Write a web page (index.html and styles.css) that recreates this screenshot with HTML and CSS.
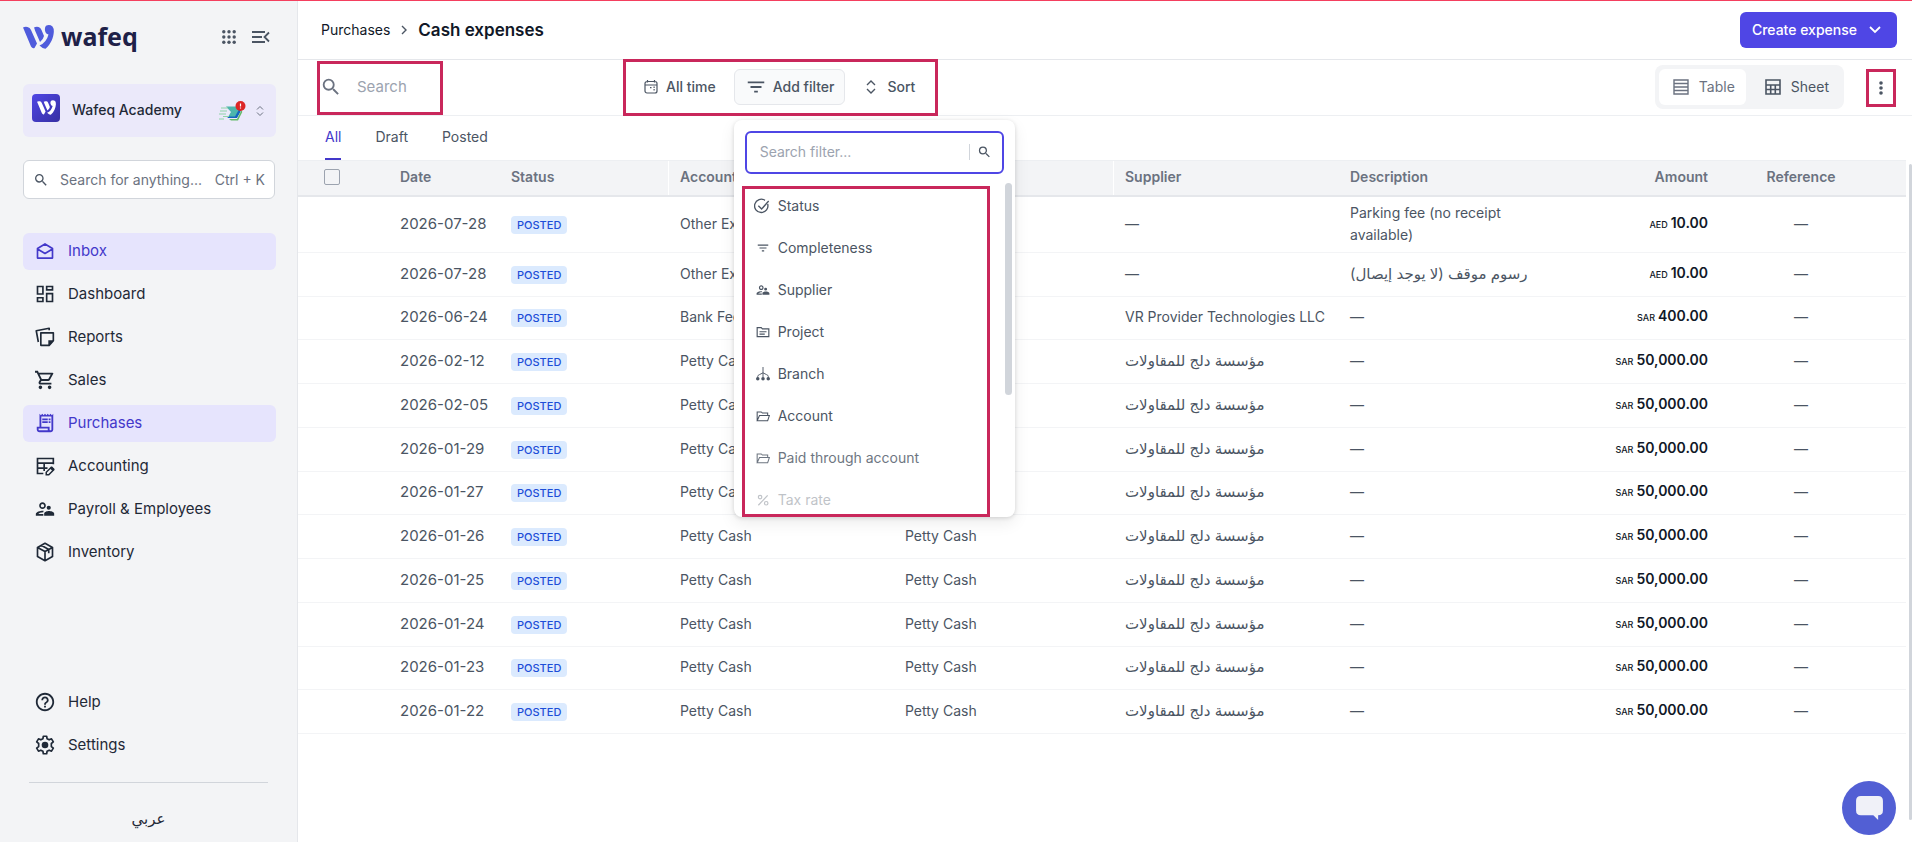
FILE: index.html
```html
<!DOCTYPE html>
<html lang="en">
<head>
    <meta charset="UTF-8">
    <meta name="viewport" content="width=device-width, initial-scale=1.0">
    <title>Cash expenses</title>
    <link rel="stylesheet" href="styles.css">
</head>
<body>
    <!-- shared icons -->
    <svg class="sprite" aria-hidden="true">
        <symbol id="logo-mark" viewBox="0 0 31 24">
            <path d="M0 2.500Q2 1.500 4.500 2Q7 2.500 8 5L14 18.500L11.500 23Q9.500 24 8 21.500L1.500 6Q.8 4 0 2.500Z"/>
            <path d="M11 2.500Q13 1.500 15.500 2Q17.500 2.500 18.500 5L21 11Q20.500 14 17 17L12 5.500Q11.700 4 11 2.500Z"/>
            <path d="M23 .8Q26.500-1 29.500 1.500Q31 3.500 30.800 7C30.500 12.500 28 19 22.500 23.800Q20 24 16.500 20.500Q23.500 17.500 25.500 9.500Q22.500 9 22 5.500Q21.500 2.500 23 .8Z"/>
        </symbol>
        <symbol id="search" viewBox="0 0 24 24"><path d="M15.500 14h-.79l-.28-.27A6.470 6.470 0 0 0 16 9.500 6.500 6.500 0 1 0 9.500 16c1.610 0 3.090-.59 4.230-1.570l.27.28v.79l5 4.990L20.490 19l-4.990-5zm-6 0C7.010 14 5 11.990 5 9.500S7.010 5 9.500 5 14 7.010 14 9.500 11.990 14 9.500 14z"/></symbol>
        <symbol id="sort" viewBox="0 0 24 24"><path d="M6 9l6-6 6 6M6 15l6 6 6-6" fill="none" stroke="currentColor" stroke-width="2"/></symbol>
        <symbol id="filter" viewBox="0 0 24 24"><path d="M10 18h4v-2h-4v2zM3 6v2h18V6H3zm3 7h12v-2H6v2z"/></symbol>
        <symbol id="people" viewBox="0 0 24 24"><path d="M16.500 13a2.500 2.500 0 1 0 0-5 2.500 2.500 0 0 0 0 5zM9 12c2.200 0 4-1.800 4-4s-1.800-4-4-4-4 1.800-4 4 1.800 4 4 4zm0-6c1.100 0 2 .9 2 2s-.9 2-2 2-2-.9-2-2 .9-2 2-2zM4 18c.22-.72 3.310-2 6-2 0-.7.130-1.370.4-1.970C7.600 13.700 1 15.100 1 18v2h9v-2H4zm12.500-3.500c-1.830 0-5.500 1.010-5.500 3V20h12v-2.500c0-1.990-3.670-3-6.500-3z"/></symbol>
        <symbol id="folder" viewBox="0 0 24 24"><path d="M2 20V5h7l2 2h9v4M2 20l4-9h17l-3 9z" fill="none" stroke="currentColor" stroke-width="1.800"/></symbol>
    </svg>

    <div class="app">
        <aside class="sidebar">
            <div class="brand">
                <svg class="brand-mark"><use href="#logo-mark"/></svg>
                <span class="brand-name">wafeq</span>
                <button class="icon-btn" aria-label="Apps">
                    <svg viewBox="0 0 14 14" width="14" height="14"><g><circle cx="1.800" cy="1.800" r="1.700"/><circle cx="7" cy="1.800" r="1.700"/><circle cx="12.200" cy="1.800" r="1.700"/><circle cx="1.800" cy="7" r="1.700"/><circle cx="7" cy="7" r="1.700"/><circle cx="12.200" cy="7" r="1.700"/><circle cx="1.800" cy="12.200" r="1.700"/><circle cx="7" cy="12.200" r="1.700"/><circle cx="12.200" cy="12.200" r="1.700"/></g></svg>
                </button>
                <button class="icon-btn" aria-label="Collapse menu">
                    <svg viewBox="0 0 18 14" width="18" height="14"><path d="M0 2h13M0 7h10M0 12h13M17 2.500L12.500 7l4.500 4.500" fill="none" stroke="currentColor" stroke-width="1.800"/></svg>
                </button>
            </div>

            <button class="company">
                <span class="company-logo"><svg><use href="#logo-mark"/></svg></span>
                <span class="company-name">Wafeq Academy</span>
                <svg class="company-badge" viewBox="0 0 27 20">
                    <path d="M7 5.500h13l1 6-3 4.500H9l3-5z" fill="#4db6ac"/>
                    <path d="M8 15.500h8l5-9 1 3-4 7.500H9z" fill="#1565c0"/>
                    <path d="M10 18h8l4.500-9 .8 2-4.300 8.500h-7z" fill="#66bb6a"/>
                    <path d="M2 7h7M1 10h7M0 13h7M0 18h5M4 15.500h6" stroke="#8fd4a8" stroke-width="1.200"/>
                    <circle cx="21.500" cy="5" r="5" fill="#dc2626"/>
                    <path d="M21.500 2.500v3M21.500 6.500v1" stroke="#fff" stroke-width="1.200"/>
                </svg>
                <svg class="company-sort"><use href="#sort"/></svg>
            </button>

            <label class="quick-search">
                <svg><use href="#search"/></svg>
                <input type="text" placeholder="Search for anything..." aria-label="Search for anything">
                <span>Ctrl + K</span>
            </label>

            <nav class="menu">
                <a href="#" class="active">
                    <svg viewBox="0 0 24 24"><path d="M3 9l9-5.500L21 9v11.500H3zM3 9.500l9 5.500 9-5.500" fill="none" stroke="currentColor" stroke-width="2" stroke-linejoin="round"/></svg>
                    Inbox
                </a>
                <a href="#">
                    <svg viewBox="0 0 24 24"><path d="M3 3h6.500v9H3zM14 3h7v4h-7zM14 11.500h7V21h-7zM3 16.500h6.500V21H3z" fill="none" stroke="currentColor" stroke-width="2"/></svg>
                    Dashboard
                </a>
                <a href="#">
                    <svg viewBox="0 0 24 24"><path d="M7 7h15v9.500L17 22H7zM4 18L1.500 4.500 17 1.500v2.500" fill="none" stroke="currentColor" stroke-width="2" stroke-linejoin="round"/><path d="M16 16h7l-7 7z"/></svg>
                    Reports
                </a>
                <a href="#">
                    <svg viewBox="0 0 24 24"><path d="M15.550 13c.75 0 1.410-.41 1.750-1.030l3.580-6.490A.996.996 0 0 0 20.010 4H5.210l-.94-2H1v2h2l3.600 7.590-1.350 2.440C4.520 15.370 5.480 17 7 17h12v-2H7l1.100-2h7.450zM6.160 6h12.150l-2.760 5H8.530L6.160 6zM7 18a2 2 0 1 0 0 4 2 2 0 0 0 0-4zm10 0a2 2 0 1 0 0 4 2 2 0 0 0 0-4z" transform="translate(-1.200 -1.200) scale(1.100)"/></svg>
                    Sales
                </a>
                <a href="#" class="active">
                    <svg viewBox="0 0 24 24"><path d="M19.500 3.500L18 2l-1.500 1.500L15 2l-1.500 1.500L12 2l-1.500 1.500L9 2 7.500 3.500 6 2v14H3v3c0 1.660 1.340 3 3 3h12c1.660 0 3-1.340 3-3V2l-1.500 1.500zM15 20H6c-.55 0-1-.45-1-1v-1h10v2zm4-1c0 .55-.45 1-1 1s-1-.45-1-1v-3H8V5h11v14zM9 7h6v2H9zm7 0h2v2h-2zm-7 3h6v2H9zm7 0h2v2h-2z" transform="translate(-1.200 -1.200) scale(1.100)"/></svg>
                    Purchases
                </a>
                <a href="#">
                    <svg viewBox="0 0 24 24"><path d="M10 21H3V3h19v7M3 8.500h19M3 14.500h12M11 8.500V18" fill="none" stroke="currentColor" stroke-width="2"/><path d="M13.500 22.500v-3l6-6 3 3-6 6z" fill="none" stroke="currentColor" stroke-width="1.800"/><path d="M18 15l2.500-2.500 3 3L21 18z"/></svg>
                    Accounting
                </a>
                <a href="#">
                    <svg><use href="#people"/></svg>
                    Payroll &amp; Employees
                </a>
                <a href="#">
                    <svg viewBox="0 0 24 24"><path d="M12 1.500l9 5v11l-9 5-9-5v-11zM3 6.500l9 5 9-5M12 11.500v11M7.500 4l9 5v4.500" fill="none" stroke="currentColor" stroke-width="2" stroke-linejoin="round"/></svg>
                    Inventory
                </a>
            </nav>

            <nav class="menu menu-bottom">
                <a href="#">
                    <svg viewBox="0 0 24 24"><path d="M11 18h2v-2h-2v2zm1-16C6.480 2 2 6.480 2 12s4.480 10 10 10 10-4.480 10-10S17.520 2 12 2zm0 18c-4.410 0-8-3.590-8-8s3.590-8 8-8 8 3.590 8 8-3.590 8-8 8zm0-14c-2.210 0-4 1.790-4 4h2c0-1.100.9-2 2-2s2 .9 2 2c0 2-3 1.750-3 5h2c0-2.250 3-2.500 3-5 0-2.210-1.790-4-4-4z" transform="translate(-1.200 -1.200) scale(1.100)"/></svg>
                    Help
                </a>
                <a href="#">
                    <svg viewBox="0 0 24 24"><path d="M9.500 4.500L10 1.500h4l.5 3 2.500 1.300 2.800-1.200 2.200 3.700-2.400 1.900v3.600l2.400 1.900-2.200 3.700-2.800-1.200-2.500 1.300-.5 3h-4l-.5-3L7 18.200l-2.800 1.200L2 15.700l2.400-1.900v-3.600L2 8.300l2.200-3.700L7 5.800z" fill="none" stroke="currentColor" stroke-width="2" stroke-linejoin="round"/><circle cx="12" cy="12" r="4"/></svg>
                    Settings
                </a>
            </nav>
            <a href="#" class="language" lang="ar">عربي</a>
        </aside>

        <main class="main">
            <header class="topbar">
                <a href="#">Purchases</a>
                <svg class="crumb" viewBox="0 0 8 10"><path d="M2 1l4 4-4 4" fill="none" stroke="currentColor" stroke-width="1.400"/></svg>
                <h1>Cash expenses</h1>
                <button class="create">
                    Create expense
                    <svg viewBox="0 0 12 8"><path d="M1 1l5 5 5-5" fill="none" stroke="currentColor" stroke-width="1.800"/></svg>
                </button>
            </header>

            <div class="toolbar">
                <label class="search marked">
                    <svg><use href="#search"/></svg>
                    <input type="text" placeholder="Search" aria-label="Search">
                </label>
                <div class="filters marked">
                    <button class="tool">
                        <svg class="calendar" viewBox="0 0 14 14"><path d="M1 5h12M3.500 0v2.500M10.500 0v2.500M3 1.500h8a2 2 0 0 1 2 2v7.500a2 2 0 0 1-2 2H3a2 2 0 0 1-2-2V3.500a2 2 0 0 1 2-2z" fill="none" stroke="currentColor" stroke-width="1.200"/><path d="M6 7h1.500v1.200H6zM9.500 6.500h1.200v1.500H9.500zM9.500 9h1.200v1.500H9.500z"/></svg>
                        All time
                    </button>
                    <div class="filter-menu">
                        <button class="tool tool-open">
                            <svg class="filter-icon"><use href="#filter"/></svg>
                            Add filter
                        </button>
                        <div class="popup">
                            <label class="popup-search">
                                <input type="text" placeholder="Search filter..." aria-label="Search filter">
                                <svg><use href="#search"/></svg>
                            </label>
                            <ul class="options">
                                <li><svg class="big" viewBox="0 0 24 24"><path d="M20.500 9a10 10 0 1 1-4-5.500M6.500 11.500l5 5L22 4.500" fill="none" stroke="currentColor" stroke-width="2"/></svg>Status</li>
                                <li><svg><use href="#filter"/></svg>Completeness</li>
                                <li><svg><use href="#people"/></svg>Supplier</li>
                                <li><svg viewBox="0 0 24 24"><path d="M2 4.500h7l2 2h11V20H2zM6 11.500h12M6 15.500h9" fill="none" stroke="currentColor" stroke-width="2"/></svg>Project</li>
                                <li><svg viewBox="0 0 24 24"><path d="M12 0v18M3 19v-3q0-2 3-3l6-3 6 3q3 1 3 3v3" fill="none" stroke="currentColor" stroke-width="1.600"/><circle cx="3" cy="20" r="3"/><circle cx="12" cy="20" r="3"/><circle cx="21" cy="20" r="3"/></svg>Branch</li>
                                <li><svg><use href="#folder"/></svg>Account</li>
                                <li class="fade"><svg><use href="#folder"/></svg>Paid through account</li>
                                <li class="fade-more"><svg viewBox="0 0 24 24"><path d="M4 21L20 4" stroke="currentColor" stroke-width="2"/><circle cx="7" cy="7" r="3" fill="none" stroke="currentColor" stroke-width="2"/><circle cx="17.500" cy="17.500" r="3" fill="none" stroke="currentColor" stroke-width="2"/></svg>Tax rate</li>
                            </ul>
                            <span class="popup-thumb"></span>
                        </div>
                    </div>
                    <button class="tool">
                        <svg class="sort-icon"><use href="#sort"/></svg>
                        Sort
                    </button>
                </div>
                <div class="views">
                    <button class="view view-on">
                        <svg viewBox="0 0 16 16"><path d="M1 1h14v14H1zM1 4.500h14M1 8h14M1 11.500h14" fill="none" stroke="currentColor" stroke-width="1.400"/></svg>
                        Table
                    </button>
                    <button class="view">
                        <svg viewBox="0 0 16 16"><path d="M1 1h14v14H1zM1 6h14M1 10.500h14M5.700 6v9M10.300 6v9" fill="none" stroke="currentColor" stroke-width="1.600"/></svg>
                        Sheet
                    </button>
                </div>
                <button class="more marked" aria-label="More">
                    <svg viewBox="0 0 4 14"><circle cx="2" cy="2" r="1.800"/><circle cx="2" cy="7" r="1.800"/><circle cx="2" cy="12" r="1.800"/></svg>
                </button>
            </div>

            <nav class="tabs">
                <a href="#" class="current">All</a>
                <a href="#">Draft</a>
                <a href="#">Posted</a>
            </nav>

            <div class="table-wrap">
                <table>
                    <colgroup>
                        <col class="c-check"><col class="c-date"><col class="c-status"><col class="c-account"><col class="c-paid"><col class="c-account"><col class="c-account"><col class="c-amount"><col>
                    </colgroup>
                    <thead>
                        <tr>
                            <th><input type="checkbox" aria-label="Select all"></th>
                            <th>Date</th>
                            <th>Status</th>
                            <th class="split">Account</th>
                            <th>Paid through</th>
                            <th class="split">Supplier</th>
                            <th>Description</th>
                            <th class="amount">Amount</th>
                            <th class="reference">Reference</th>
                        </tr>
                    </thead>
                    <tbody>
                        <tr><td></td><td class="date">2026-07-28</td><td><span class="badge">POSTED</span></td><td>Other Expenses</td><td>Petty Cash</td><td>—</td><td>Parking fee (no receipt available)</td><td class="amount"><small>AED</small>10.00</td><td class="reference">—</td></tr>
                        <tr><td></td><td class="date">2026-07-28</td><td><span class="badge">POSTED</span></td><td>Other Expenses</td><td>Petty Cash</td><td>—</td><td><bdi>رسوم موقف (لا يوجد إيصال)</bdi></td><td class="amount"><small>AED</small>10.00</td><td class="reference">—</td></tr>
                        <tr><td></td><td class="date">2026-06-24</td><td><span class="badge">POSTED</span></td><td>Bank Fees</td><td>Petty Cash</td><td>VR Provider Technologies LLC</td><td>—</td><td class="amount"><small>SAR</small>400.00</td><td class="reference">—</td></tr>
                        <tr><td></td><td class="date">2026-02-12</td><td><span class="badge">POSTED</span></td><td>Petty Cash</td><td>Petty Cash</td><td><bdi>مؤسسة دلج للمقاولات</bdi></td><td>—</td><td class="amount"><small>SAR</small>50,000.00</td><td class="reference">—</td></tr>
                        <tr><td></td><td class="date">2026-02-05</td><td><span class="badge">POSTED</span></td><td>Petty Cash</td><td>Petty Cash</td><td><bdi>مؤسسة دلج للمقاولات</bdi></td><td>—</td><td class="amount"><small>SAR</small>50,000.00</td><td class="reference">—</td></tr>
                        <tr><td></td><td class="date">2026-01-29</td><td><span class="badge">POSTED</span></td><td>Petty Cash</td><td>Petty Cash</td><td><bdi>مؤسسة دلج للمقاولات</bdi></td><td>—</td><td class="amount"><small>SAR</small>50,000.00</td><td class="reference">—</td></tr>
                        <tr><td></td><td class="date">2026-01-27</td><td><span class="badge">POSTED</span></td><td>Petty Cash</td><td>Petty Cash</td><td><bdi>مؤسسة دلج للمقاولات</bdi></td><td>—</td><td class="amount"><small>SAR</small>50,000.00</td><td class="reference">—</td></tr>
                        <tr><td></td><td class="date">2026-01-26</td><td><span class="badge">POSTED</span></td><td>Petty Cash</td><td>Petty Cash</td><td><bdi>مؤسسة دلج للمقاولات</bdi></td><td>—</td><td class="amount"><small>SAR</small>50,000.00</td><td class="reference">—</td></tr>
                        <tr><td></td><td class="date">2026-01-25</td><td><span class="badge">POSTED</span></td><td>Petty Cash</td><td>Petty Cash</td><td><bdi>مؤسسة دلج للمقاولات</bdi></td><td>—</td><td class="amount"><small>SAR</small>50,000.00</td><td class="reference">—</td></tr>
                        <tr><td></td><td class="date">2026-01-24</td><td><span class="badge">POSTED</span></td><td>Petty Cash</td><td>Petty Cash</td><td><bdi>مؤسسة دلج للمقاولات</bdi></td><td>—</td><td class="amount"><small>SAR</small>50,000.00</td><td class="reference">—</td></tr>
                        <tr><td></td><td class="date">2026-01-23</td><td><span class="badge">POSTED</span></td><td>Petty Cash</td><td>Petty Cash</td><td><bdi>مؤسسة دلج للمقاولات</bdi></td><td>—</td><td class="amount"><small>SAR</small>50,000.00</td><td class="reference">—</td></tr>
                        <tr><td></td><td class="date">2026-01-22</td><td><span class="badge">POSTED</span></td><td>Petty Cash</td><td>Petty Cash</td><td><bdi>مؤسسة دلج للمقاولات</bdi></td><td>—</td><td class="amount"><small>SAR</small>50,000.00</td><td class="reference">—</td></tr>
                    </tbody>
                </table>
                <span class="table-thumb"></span>
            </div>
        </main>
    </div>

    <button class="chat" aria-label="Chat">
        <svg viewBox="0 0 28 25"><path d="M5 0h18q5 0 5 5v10q0 5-5 5v5l-5-5H5q-5 0-5-5V5q0-5 5-5z"/></svg>
    </button>
</body>
</html>
```
FILE: styles.css
```css
* {
    margin: 0;
    padding: 0;
    box-sizing: border-box;
}

body {
    font-family: Inter, "DejaVu Sans", sans-serif;
    font-size: 14px;
    line-height: 22px;
    color: #4b5563;
    background-color: #fff;
}

a {
    color: inherit;
    text-decoration: none;
}

button,
input {
    font: inherit;
    color: inherit;
    border: 0;
    background: none;
}

button {
    cursor: pointer;
}

input {
    min-width: 0;
    outline: none;
}

input::placeholder {
    color: #9ca3af;
    opacity: 1;
}

svg {
    fill: currentColor;
    flex-shrink: 0;
}

.sprite {
    display: none;
}

.app {
    display: flex;
    min-height: 100vh;
    border-top: 1px solid #f43f5e;
}

/* sidebar */
.sidebar {
    width: 298px;
    flex-shrink: 0;
    display: flex;
    flex-direction: column;
    padding: 20px 21px 10px 23px;
    background-color: #f3f4f6;
    border-right: 1px solid #e5e7eb;
    color: #1f2937;
}

.brand {
    display: flex;
    align-items: center;
    height: 32px;
    padding-right: 6px;
    color: #4b5563;
}

.brand-mark {
    width: 31px;
    height: 24px;
    color: #4f5bdc;
}

.brand-name {
    flex: 1;
    margin-left: 7px;
    padding-bottom: 2px;
    font: 700 25px/30px "Noto Sans", sans-serif;
    color: #1e2148;
}

.icon-btn {
    display: flex;
    margin-left: 16px;
}

.company {
    display: flex;
    align-items: center;
    height: 53px;
    margin-top: 31px;
    padding: 0 10px 0 9px;
    border-radius: 6px;
    background-color: #ebe9fa;
    font-weight: 500;
}

.company-logo {
    display: flex;
    align-items: center;
    justify-content: center;
    width: 28px;
    height: 28px;
    margin: 0 12px 6px 0;
    border-radius: 4px;
    background: linear-gradient(135deg, #4f46e5, #3730a3);
    color: #fff;
}

.company-logo svg {
    width: 19px;
    height: 15px;
}

.company-name {
    flex: 1;
    padding-bottom: 2px;
    text-align: left;
}

.company-badge {
    width: 27px;
    height: 20px;
    margin-right: 8px;
}

.company-sort {
    width: 12px;
    height: 12px;
    color: #6b7280;
}

.quick-search {
    display: flex;
    align-items: center;
    height: 39px;
    margin: 23px 1px 0 0;
    padding: 0 9px;
    border: 1px solid #d1d5db;
    border-radius: 6px;
    background-color: #fff;
    color: #6b7280;
    white-space: nowrap;
}

.quick-search svg {
    width: 16px;
    height: 16px;
    margin-right: 11px;
    color: #4b5563;
}

.quick-search input {
    flex: 1;
}

.quick-search input::placeholder {
    color: #6b7280;
}

.menu {
    display: flex;
    flex-direction: column;
    gap: 6px;
    margin-top: 34px;
}

.menu a {
    display: flex;
    align-items: center;
    gap: 13px;
    height: 37px;
    padding: 0 0 2px 12px;
    border-radius: 6px;
    font-size: 15px;
}

.menu .active {
    background-color: #e6e4fd;
    color: #4338ca;
}

.menu svg {
    width: 20px;
    height: 20px;
}

.menu-bottom {
    margin: auto 7px 0 0;
    padding-bottom: 18px;
}

.language {
    margin: 0 8px 0 6px;
    padding-top: 23px;
    border-top: 1px solid #d1d5db;
    text-align: center;
    font-size: 15px;
    line-height: 26px;
}

/* page header */
.main {
    flex: 1;
    min-width: 0;
}

.topbar {
    display: flex;
    align-items: center;
    height: 59px;
    padding: 0 15px 0 23px;
    border-bottom: 1px solid #e5e7eb;
    color: #111827;
}

.topbar .crumb {
    width: 8px;
    height: 10px;
    margin: 0 10px;
    color: #4b5563;
}

.topbar h1 {
    flex: 1;
    font-size: 17px;
    font-weight: 600;
}

.create {
    display: flex;
    align-items: center;
    gap: 12px;
    height: 36px;
    padding: 0 16px 0 12px;
    border-radius: 6px;
    background-color: #4f46e5;
    color: #fff;
    font-weight: 500;
}

.create svg {
    width: 12px;
    height: 8px;
}

.toolbar {
    display: flex;
    align-items: center;
    height: 56px;
    padding-left: 19px;
    border-bottom: 1px solid #edeff2;
}

.marked {
    border: 3px solid #c9275b;
}

.search {
    display: flex;
    align-items: center;
    width: 126px;
    height: 54px;
    padding: 0 3px 2px 0;
}

.search svg {
    width: 22px;
    height: 22px;
    margin-right: 15px;
    color: #6b7280;
}

.search input {
    flex: 1;
    width: 100%;
    font-size: 15px;
}

.filters {
    display: flex;
    align-items: center;
    gap: 2px;
    height: 57px;
    margin-left: 180px;
    padding: 0 4px 2px 2px;
}

.tool {
    display: flex;
    align-items: center;
    gap: 8px;
    height: 36px;
    padding: 0 15px;
    border: 1px solid transparent;
    border-radius: 6px;
    font-weight: 500;
}

.tool-open {
    gap: 6px;
    padding: 0 10px;
    border-color: #e5e7eb;
    background-color: #f9fafb;
}

.calendar {
    width: 14px;
    height: 14px;
}

.sort-icon {
    width: 16px;
    height: 16px;
}

.filter-icon {
    width: 22px;
    height: 22px;
}

.filter-menu {
    position: relative;
}

.popup {
    position: absolute;
    z-index: 2;
    top: 51px;
    left: 0;
    width: 281px;
    height: 397px;
    padding-top: 11px;
    border-radius: 8px;
    background-color: #fff;
    box-shadow: 0 1px 4px rgba(0, 0, 0, .14), 0 6px 16px rgba(0, 0, 0, .08);
}

.popup-search {
    display: flex;
    align-items: center;
    height: 43px;
    margin: 0 11px;
    padding: 0 10px 0 13px;
    border: 2px solid #4f46e5;
    border-radius: 6px;
}

.popup-search input {
    flex: 1;
}

.popup-search svg {
    width: 23px;
    height: 16px;
    padding-left: 7px;
    border-left: 1px solid #d1d5db;
}

.options {
    width: 248px;
    height: 331px;
    margin: 12px 0 0 8px;
    padding: 0 9px;
    overflow: hidden;
    border: 3px solid #c9275b;
    list-style: none;
}

.options li {
    display: flex;
    align-items: center;
    gap: 8px;
    height: 42px;
    padding: 0 0 8px 2px;
}

.options svg {
    width: 14px;
    height: 14px;
}

.options .big {
    width: 16px;
    height: 16px;
    margin-left: -2px;
}

.fade {
    opacity: .8;
}

.fade-more {
    opacity: .35;
}

.popup-thumb {
    position: absolute;
    top: 63px;
    right: 3px;
    width: 7px;
    height: 212px;
    border-radius: 4px;
    background-color: #d1d5db;
}

.views {
    display: flex;
    height: 44px;
    margin: 0 0 2px auto;
    padding: 4px;
    border-radius: 8px;
    background-color: #f3f4f6;
}

.view {
    display: flex;
    align-items: center;
    gap: 10px;
    padding: 0 11px 0 14px;
    border-radius: 6px;
}

.view + .view {
    padding-left: 19px;
}

.view-on {
    background-color: #fff;
    color: #6b7280;
}

.view svg {
    width: 16px;
    height: 16px;
}

.more {
    display: flex;
    align-items: center;
    justify-content: center;
    width: 30px;
    height: 38px;
    margin: 0 16px 0 22px;
}

.more svg {
    width: 4px;
    height: 14px;
}

.tabs {
    display: flex;
    gap: 34px;
    height: 44px;
    padding: 0 27px;
}

.tabs a {
    padding-top: 10px;
}

.tabs .current {
    color: #4338ca;
    border-bottom: 2px solid #4338ca;
}

/* table */
.table-wrap {
    position: relative;
    padding-right: 6px;
}

table {
    width: 100%;
    table-layout: fixed;
    border-collapse: separate;
    border-spacing: 0;
}

.c-check {
    width: 90px;
}

.c-date {
    width: 111px;
}

.c-status {
    width: 169px;
}

.c-account {
    width: 225px;
}

.c-paid {
    width: 220px;
}

.c-amount {
    width: 157px;
}

th {
    height: 37px;
    padding: 0 12px 2px;
    background-color: #f3f4f6;
    border-top: 1px solid #edeff2;
    border-bottom: 2px solid #e5e7eb;
    color: #6b7280;
    font-weight: 600;
    text-align: left;
}

th.split {
    box-shadow: inset 1px 0 #fff;
}

th input {
    appearance: none;
    display: block;
    width: 16px;
    height: 16px;
    margin-left: 14px;
    border: 1px solid #9ca3af;
    border-radius: 2px;
}

td {
    height: 44px;
    padding: 0 12px 2px;
    border-bottom: 1px solid #f3f4f6;
}

tr:first-child td {
    height: 56px;
}

tr:nth-child(4n+3) td {
    height: 43px;
}

.date {
    font-size: 15px;
    white-space: nowrap;
}

bdi {
    font-size: 15px;
}

.badge {
    display: inline-block;
    height: 18px;
    padding: 0 6px;
    border-radius: 4px;
    background-color: #dbeafe;
    color: #1d4ed8;
    font-size: 11px;
    font-weight: 500;
    line-height: 18px;
    vertical-align: middle;
}

.amount {
    text-align: right;
}

td.amount {
    color: #111827;
    font-weight: 600;
}

.amount small {
    margin-right: 3px;
    font-size: 9px;
    font-weight: 500;
}

.reference {
    padding-right: 36px;
    text-align: center;
}

.table-thumb {
    position: absolute;
    top: 4px;
    right: 0;
    width: 3px;
    height: 656px;
    border-radius: 2px;
    background-color: #d1d5db;
}

.chat {
    position: fixed;
    right: 16px;
    bottom: 7px;
    display: flex;
    align-items: center;
    justify-content: center;
    width: 54px;
    height: 54px;
    border-radius: 50%;
    background-color: #525fd4;
    color: #f0f1f8;
}

.chat svg {
    width: 27px;
    height: 24px;
}
```
